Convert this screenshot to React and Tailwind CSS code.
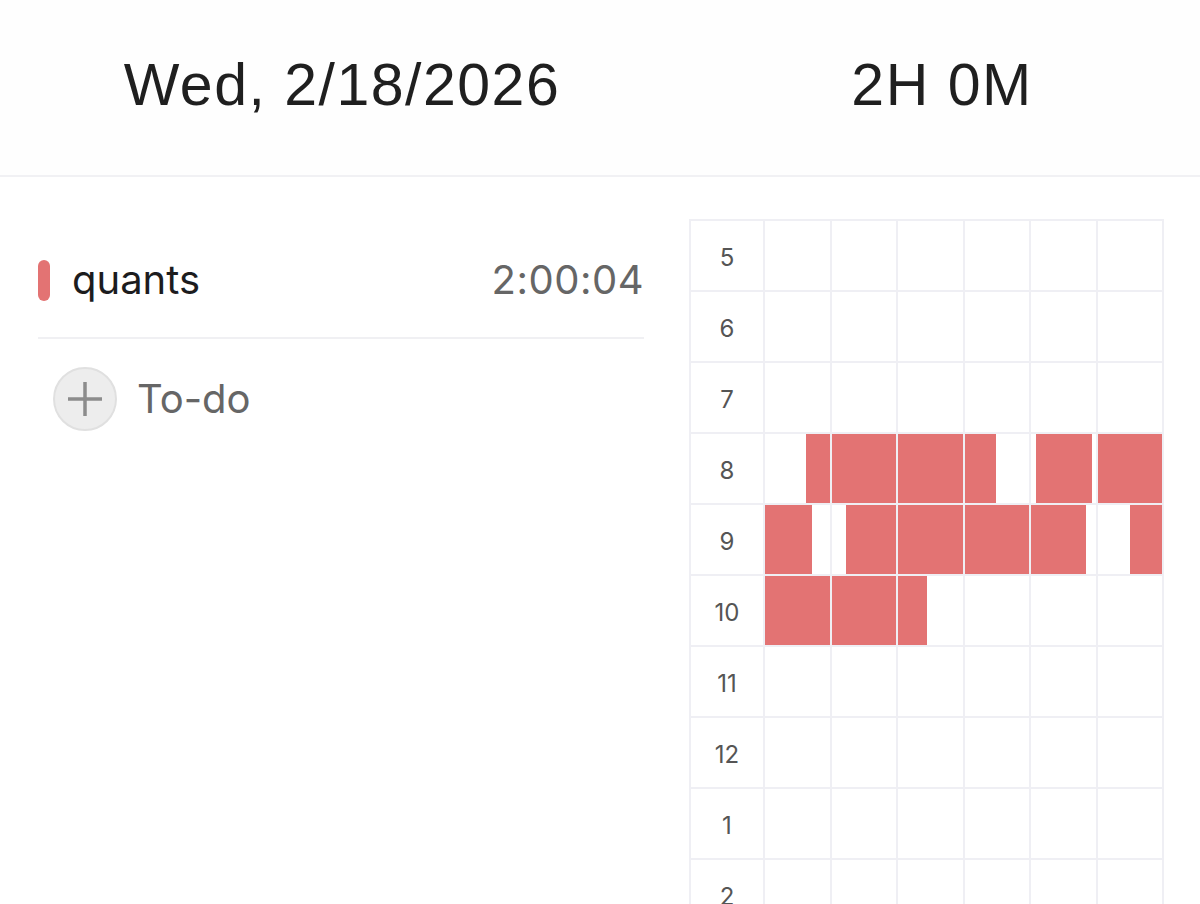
const hours = [5, 6, 7, 8, 9, 10, 11, 12, 1, 2, 3];

// tracked spans per hour row: [column, from, to] as fractions of a 10 minute cell
const spans = {
  8: [[0, 0.64, 1], [1, 0, 1], [2, 0, 1], [3, 0, 0.49], [4, 0.08, 0.95], [5, 0, 1]],
  9: [[0, 0, 0.73], [1, 0.22, 1], [2, 0, 1], [3, 0, 1], [4, 0, 0.85], [5, 0.5, 1]],
  10: [[0, 0, 1], [1, 0, 1], [2, 0, 0.45]],
};

const sans = "font-['Inter','Noto_Sans',sans-serif]";

const HourRow = ({ hour }) => {
  const rowSpans = spans[hour] || [];
  return (
    <>
      <div className={`bg-white h-[69px] flex items-center justify-center pt-[4px] text-[24px] text-[#555] ${sans}`}>
        {hour}
      </div>
      {[0, 1, 2, 3, 4, 5].map((col) => (
        <div key={col} className="bg-white h-[69px] relative">
          {rowSpans
            .filter((s) => s[0] === col)
            .map((s, i) => (
              <div
                key={i}
                className="absolute top-0 bottom-0 bg-[#e37373]"
                style={{ left: `${s[1] * 100}%`, right: `${(1 - s[2]) * 100}%` }}
              />
            ))}
        </div>
      ))}
    </>
  );
};

const App = () => {
  return (
    <div className="w-[1200px] h-[904px] overflow-hidden bg-white">
      {/* Header */}
      <div className="flex h-[177px] border-b-2 border-[#f1f1f4] bg-[#fefefe] font-['Liberation_Sans','Arial',sans-serif] text-[59px] tracking-[1.5px] text-[#1f1f1f]">
        <div className="w-[684px] flex items-center justify-center pb-[4px]">Wed, 2/18/2026</div>
        <div className="flex-1 flex items-center justify-center pb-[4px]">2H 0M</div>
      </div>

      {/* Body */}
      <div className="flex pt-[42px]">
        <div className={`w-[689px] pl-[38px] pr-[45px] ${sans}`}>
          <div className="h-[118px] flex items-center pt-[4px]">
            <span className="w-[12px] h-[41px] rounded-full bg-[#e37373]" />
            <span className="ml-[22px] text-[40px] text-[#1c1c1e]">quants</span>
            <span className="ml-auto text-[40px] tracking-[0.5px] text-[#666]">2:00:04</span>
          </div>
          <hr className="border-t-2 border-[#f0f0f3]" />
          <div className="flex items-center mt-[28px] ml-[15px]">
            <div className="w-[64px] h-[64px] rounded-full bg-[#ededed] border-2 border-[#e0e0e0] flex items-center justify-center">
              <svg width="36" height="36" viewBox="0 0 36 36">
                <path d="M18 1v34M1 18h34" stroke="#8c8c8c" strokeWidth="3.5" />
              </svg>
            </div>
            <span className="ml-[20px] text-[40px] text-[#666]">To-do</span>
          </div>
        </div>

        <div className="w-[475px] self-start bg-[#efeff4] p-[2px] grid grid-cols-[72px_repeat(6,1fr)] gap-[2px]">
          {hours.map((h) => (
            <HourRow key={h} hour={h} />
          ))}
        </div>
      </div>
    </div>
  );
};

export default App;
